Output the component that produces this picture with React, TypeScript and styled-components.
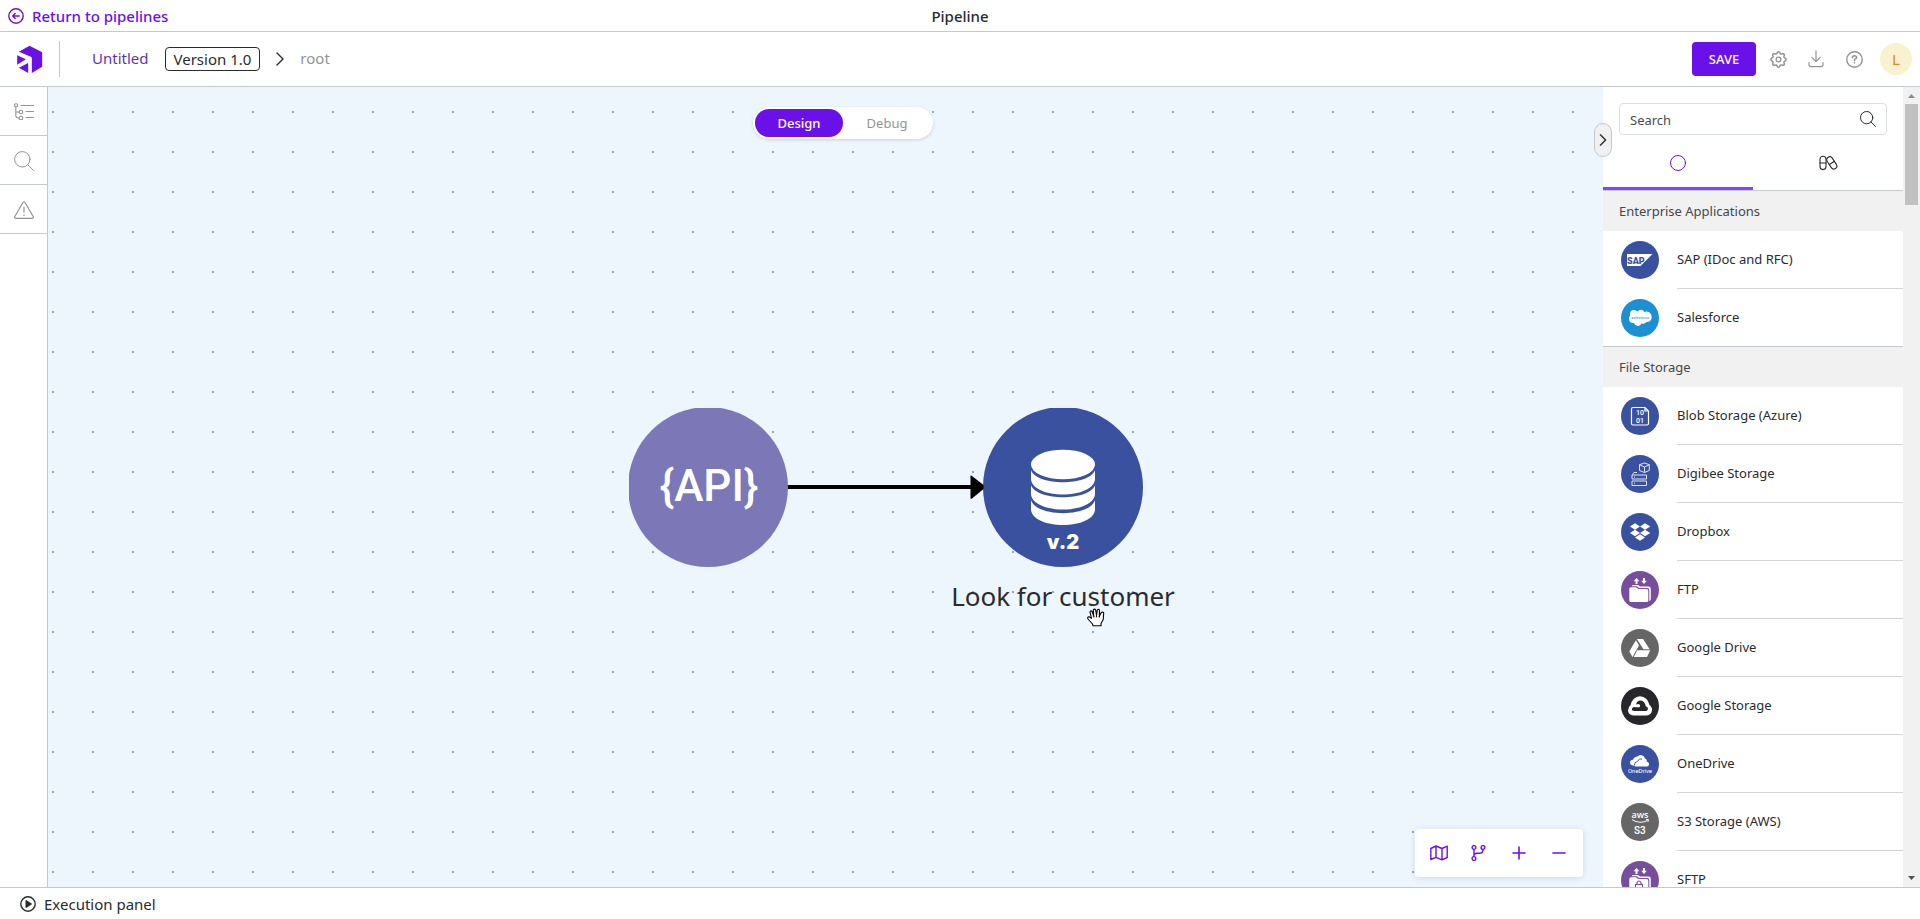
import React from 'react';
import styled, { createGlobalStyle } from 'styled-components';

const color = {
  brand: '#6a11ea',
  brandLight: '#8442ff',
  line: '#c3cacb',
  text: '#2a2b2e',
  muted: '#949494',
  canvas: '#edf5fd',
  panel: '#f1f1f1',
  navy: '#3a519f',
};

const GlobalStyle = createGlobalStyle`
  *, *::before, *::after { box-sizing: border-box; }
  body { margin: 0; }
  body, button, input { font-family: 'Noto Sans', sans-serif; color: ${color.text}; }
  button { margin: 0; padding: 0; border: 0; background: none; cursor: pointer; }
  svg { display: block; flex: none; }
  ul { list-style: none; margin: 0; padding: 0; }
  h1, h2 { margin: 0; font-weight: 400; }
`;

const Page = styled.div`
  display: flex;
  flex-direction: column;
  height: 100vh;
  background: #fff;
  font-size: 15px;
  line-height: 24px;
`;

const TopBar = styled.div`
  display: grid;
  grid-template-columns: 1fr auto 1fr;
  align-items: center;
  height: 32px;
  padding: 0 8px;
  border-bottom: 1px solid ${color.line};
`;

const ReturnLink = styled.a`
  display: flex;
  align-items: center;
  justify-self: start;
  gap: 8px;
  color: ${color.brand};
  font-weight: 500;
  text-decoration: none;
`;

const Title = styled.h1`
  font-size: 15px;
  font-weight: 500;
`;

const Header = styled.header`
  display: flex;
  align-items: center;
  justify-content: space-between;
  height: 55px;
  padding: 0 8px 0 16px;
  border-bottom: 1px solid ${color.line};
`;

const Crumbs = styled.nav`
  display: flex;
  align-items: center;
`;

const LogoBox = styled.div`
  display: flex;
  align-items: center;
  width: 44px;
  height: 36px;
  margin-right: 32px;
  border-right: 1px solid ${color.line};
`;

const FlowLink = styled.a`
  padding-bottom: 2px;
  color: #5e35b1;
  text-decoration: none;
`;

const Version = styled.span`
  height: 24px;
  margin: 0 16px;
  padding: 0 8px;
  border: 1px solid ${color.text};
  border-radius: 4px;
  line-height: 23px;
`;

const Level = styled.span`
  margin-left: 16px;
  padding-bottom: 2px;
  color: ${color.muted};
`;

const Actions = styled.div`
  display: flex;
  align-items: center;
  gap: 14px;
  color: ${color.muted};
`;

const IconButton = styled.button`
  display: flex;
  align-items: center;
  justify-content: center;
  width: 24px;
  height: 24px;
  color: inherit;
`;

const SaveButton = styled.button`
  width: 64px;
  height: 34px;
  margin-right: -4px;
  border-radius: 4px;
  background: ${color.brand};
  color: #fff;
  font-size: 13px;
  font-weight: 500;
`;

const Avatar = styled.button`
  width: 32px;
  height: 32px;
  border-radius: 50%;
  background: #faf1cf;
  color: #d98a2b;
  font-size: 15px;
`;

const Body = styled.div`
  display: flex;
  flex: 1;
  min-height: 0;
`;

const Rail = styled.nav`
  width: 48px;
  flex: none;
  border-right: 1px solid ${color.line};
`;

const RailButton = styled.button`
  display: flex;
  align-items: center;
  justify-content: center;
  width: 100%;
  height: 49px;
  padding-top: 1px;
  border-bottom: 1px solid ${color.line};
  color: ${color.muted};
`;

const Canvas = styled.main`
  position: relative;
  flex: 1;
  min-width: 0;
  overflow: hidden;
  background: ${color.canvas} radial-gradient(circle at 5px 25px, #9fa6b2 1px, transparent 1px) 0 0 / 40px 40px;
`;

const ModeBar = styled.div`
  position: absolute;
  top: 20px;
  left: 0;
  right: 0;
  display: flex;
  justify-content: center;
  padding-left: 35px;
`;

const ModeSwitch = styled.div`
  display: flex;
  padding: 2px;
  width: 180px;
  border-radius: 16px;
  background: #fff;
  box-shadow: 0 1px 3px rgba(60, 70, 100, 0.2);
`;

const Mode = styled.button<{ $active?: boolean }>`
  flex: 1;
  height: 28px;
  border-radius: 14px;
  background: ${(p) => (p.$active ? color.brand : 'transparent')};
  color: ${(p) => (p.$active ? '#fff' : color.muted)};
  font-size: 13px;
  font-weight: ${(p) => (p.$active ? 500 : 400)};
`;

const Graph = styled.svg`
  position: absolute;
  top: 320px;
  left: 580px;
`;

const NodeLabel = styled.div`
  position: absolute;
  top: 489px;
  left: 895px;
  width: 240px;
  font-size: 26px;
  line-height: 40px;
  text-align: center;
  white-space: nowrap;
`;

const Pointer = styled.svg`
  position: absolute;
  top: 521px;
  left: 1039px;
`;

const CanvasTools = styled.div`
  position: absolute;
  right: 20px;
  bottom: 10px;
  display: flex;
  padding: 0 4px;
  border-radius: 4px;
  background: #fff;
  color: ${color.brand};
  box-shadow: 0 1px 6px rgba(60, 70, 100, 0.15);
`;

const Tool = styled(IconButton)`
  width: 40px;
  height: 48px;
`;

const Sidebar = styled.aside`
  position: relative;
  display: flex;
  width: 317px;
  flex: none;
`;

const Collapse = styled.button`
  position: absolute;
  top: 36px;
  left: -9px;
  display: flex;
  align-items: center;
  justify-content: center;
  width: 18px;
  height: 34px;
  border: 1px solid ${color.line};
  border-radius: 9px;
  background: ${color.panel};
`;

const Palette = styled.div`
  flex: 1;
  min-width: 0;
  overflow-y: auto;
  scrollbar-width: none;
`;

const SearchBox = styled.label`
  display: flex;
  align-items: center;
  height: 32px;
  margin: 16px 16px 0;
  padding: 0 10px;
  border: 1px solid #dcdfdf;
  border-radius: 4px;
`;

const SearchInput = styled.input`
  flex: 1;
  min-width: 0;
  height: 28px;
  padding: 2px 0 0;
  border: 0;
  outline: 0;
  background: none;
  font-size: 13px;
  &::placeholder { color: #4a4b4e; opacity: 1; }
`;

const Tabs = styled.div`
  display: flex;
  height: 56px;
  border-bottom: 1px solid ${color.line};
`;

const Tab = styled.button<{ $active?: boolean }>`
  position: relative;
  display: flex;
  align-items: center;
  justify-content: center;
  flex: 1;
  padding-top: 1px;
  color: ${(p) => (p.$active ? color.brand : color.text)};
  box-shadow: ${(p) => (p.$active ? `inset 0 -3px ${color.brandLight}` : 'none')};
`;

const Group = styled.section`
  font-size: 13px;
  & + & { border-top: 1px solid ${color.line}; }
`;

const GroupTitle = styled.h2`
  padding: 0 16px;
  background: ${color.panel};
  color: #45464a;
  font-size: 13px;
  line-height: 40px;
`;

const Item = styled.li`
  display: flex;
  align-items: stretch;
  padding-left: 18px;
  &:last-child > span { border-bottom: 0; height: 57px; }
`;

const ItemIcon = styled.div`
  width: 56px;
  padding-top: 10px;
`;

const ItemName = styled.span`
  flex: 1;
  height: 58px;
  border-bottom: 1px solid #d2d4d5;
  line-height: 56px;
`;

const ScrollTrack = styled.div`
  display: flex;
  flex-direction: column;
  align-items: center;
  width: 17px;
  padding: 7px 0;
  background: ${color.panel};
`;

const ScrollThumb = styled.div`
  width: 13px;
  height: 101px;
  margin-top: 6px;
  margin-bottom: auto;
  background: #c1c1c1;
`;

const Footer = styled.footer`
  height: 32px;
  padding: 0 20px;
  border-top: 1px solid ${color.line};
`;

const PanelButton = styled.button`
  display: flex;
  align-items: center;
  gap: 8px;
  height: 31px;
  font-size: 15px;
`;

type IconProps = { w?: number; h?: number; vb?: string; sw?: number; children: React.ReactNode };

const Line = ({ w = 16, h = w, vb, sw = 1, children }: IconProps) => (
  <svg width={w} height={h} viewBox={vb ?? `0 0 ${w} ${h}`} fill="none" stroke="currentColor" strokeWidth={sw}
    strokeLinecap="round" strokeLinejoin="round" aria-hidden="true">{children}</svg>
);

const Magnifier = ({ size = 16 }: { size?: number }) => (
  <Line w={size} vb="0 0 20 20" sw={20 / size}>
    <circle cx="8.3" cy="8.3" r="7.7" /><path d="M13.8 13.8 19.4 19.4" />
  </Line>
);

const Chevron = ({ h = 14, sw = 1.4 }: { h?: number; sw?: number }) => (
  <Line w={8} h={h} vb="0 0 8 14" sw={sw}><path d="M1 1 7 7 1 13" /></Line>
);

const Logo = () => (
  <svg width="27" height="29" viewBox="0 0 80 87" fill={color.brand} role="img" aria-label="Home">
    <path d="M8 20 40 2 78 22V65L47 84V38L44 35Z" />
    <path d="M3 31 29 43 3 59Z" />
    <path d="M36 54V84L8 68Z" />
  </svg>
);

const TreeIcon = () => (
  <Line w={20} h={17} sw={1.1}>
    <rect x="0.6" y="0.7" width="3" height="3" rx="1" />
    <circle cx="7" cy="9" r="1.8" /><circle cx="7" cy="15" r="1.8" />
    <path d="M1.8 4V12.5Q1.8 15 4.5 15H5M2 9H5" />
    <path d="M7 2.5H19.5M12 8.5H19.5M12 14.5H19.5" />
  </Line>
);

const WarningIcon = () => (
  <Line w={20} h={18} sw={1.2}>
    <path d="M9 1.5Q10 0 11 1.5L19.2 15.5Q19.8 17.3 18 17.3H2Q.2 17.3 .8 15.5Z" />
    <path d="M10 6V11.2M10 13.8V14.4" />
  </Line>
);

const GearIcon = () => (
  <Line w={17} vb="0 0 24 24" sw={1.8}>
    <path d="M10.325 4.317c.426-1.756 2.924-1.756 3.35 0a1.724 1.724 0 0 0 2.573 1.066c1.543-.94 3.31.826 2.37 2.37a1.724 1.724 0 0 0 1.065 2.572c1.756.426 1.756 2.924 0 3.35a1.724 1.724 0 0 0-1.066 2.573c.94 1.543-.826 3.31-2.37 2.37a1.724 1.724 0 0 0-2.572 1.065c-.426 1.756-2.924 1.756-3.35 0a1.724 1.724 0 0 0-2.573-1.066c-1.543.94-3.31-.826-2.37-2.37a1.724 1.724 0 0 0-1.065-2.572c-1.756-.426-1.756-2.924 0-3.35a1.724 1.724 0 0 0 1.066-2.573c-.94-1.543.826-3.31 2.37-2.37.996.608 2.296.07 2.572-1.065z" transform="translate(-2.4 -2.4) scale(1.2)" />
    <circle cx="12" cy="12" r="3.4" />
  </Line>
);

const DownloadIcon = () => (
  <Line w={16} h={18} sw={1.2}>
    <path d="M8 .8V11.4M3.8 7.4 8 11.6 12.2 7.4M1 12.5V14.5Q1 16.6 3 16.6H13Q15 16.6 15 14.5V12.5" />
  </Line>
);

const HelpIcon = () => (
  <Line w={17} vb="0 0 16 16" sw={1.3}>
    <circle cx="8" cy="8" r="7.3" />
    <path d="M6 6.2Q6.1 4.4 8 4.4T10 6.1Q10 7.2 8 8V8.9M8 11V11.3" strokeWidth="1.5" />
  </Line>
);

const PillsIcon = () => (
  <Line w={19} h={16} sw={1.1}>
    <rect x="1" y="1.2" width="6" height="13.4" rx="3" /><path d="M1 8H7" />
    <rect x="-3" y="-6.7" width="6" height="13.4" rx="3" transform="translate(12.8 7.9) rotate(-33)" />
    <path d="M10.4 9.5 15.4 6.3" />
  </Line>
);

const FlowGraph = () => (
  <Graph width="516" height="160" viewBox="0 0 516 160" role="img" aria-label="API trigger connected to Look for customer">
    <clipPath id="node-bounds"><rect x="1" y="1" width="515" height="159" /></clipPath>
    <path d="M158 80H346" stroke="#000" strokeWidth="4" />
    <g clipPath="url(#node-bounds)">
      <circle cx="80" cy="80" r="80" fill="#7c78b8" />
      <circle cx="435" cy="80" r="80" fill={color.navy} />
    </g>
    <path d="M342.5 69.5Q342.5 68 344 69L355.500 78V82L344 91.4Q342.5 92.5 342.5 91Z" />
    <text x="81" y="94" fill="#fff" textAnchor="middle" fontFamily="Roboto, sans-serif" fontWeight="500" fontSize="44">{'{API}'}</text>
    <g transform="translate(403 42.5) scale(.3333)" fill="#fff">
      <ellipse cx="96" cy="45" rx="96" ry="44.5" />
      <path d="M0 62C18 110 174 110 192 62V91C182 150 10 150 0 91Z" />
      <path d="M0 107C18 155 174 155 192 107V136C182 195 10 195 0 136Z" />
      <path d="M0 152C18 204 174 204 192 152V182C182 241 10 241 0 182Z" />
    </g>
    <text x="435" y="142" fill="#fff" textAnchor="middle" fontFamily="Inter, sans-serif" fontWeight="900" fontSize="20">v.2</text>
  </Graph>
);

const HandPointer = () => (
  <Pointer width="18" height="19" viewBox="0 0 18 19" fill="#fff" stroke="#000" strokeWidth="1.1" strokeLinejoin="round" aria-hidden="true">
    <path d="M6 17.8 5.500 16 1 11Q0 9 2 8.700L4.500 10.200 3 4.200Q3.500 2.200 5 3.200L6.700 8 6.300 2Q7.500 .2 8.700 2L9.500 7.500 10.300 2Q11.500 .5 12.500 2.200L12.300 8.300 14.300 4.500Q16.200 3.500 16.700 5L16.200 11.500 14 15.500V17.800Z" />
    <path d="M6.900 8V9.500M9.500 7.500V9.200M12.300 8V9.500" fill="none" />
  </Pointer>
);

const Folder = ({ lock }: { lock?: boolean }) => (
  <g fill="#fff">
    <path d="M15.5 7 18.3 10.2H16.5V13H14.5V10.2H12.7ZM23 13 20.2 9.8H22V7H24V9.8H25.8Z" />
    <path d="M11 15Q11 14 12 14H17L19 15.6H27.5Q29.8 15.6 29.8 18V28Q29.8 29.5 28.3 30.2V19Q28.3 17 26 17H18L16 15.3H11Z" />
    <path d="M8.3 18Q8.3 16.3 10 16.3H15L17.3 18H25.5Q27.3 18 27.3 20V29.5Q27.3 31 25.5 31H10Q8.3 31 8.3 29.5Z" />
    {lock && <path d="M14.5 23.5H21.5V29H14.5ZM16 23.5V21.5Q18 18.5 20 21.5V23.5" fill="none" stroke="#774e9b" strokeWidth="1.2" />}
  </g>
);

const glyphs: Record<string, { bg: string; art: React.ReactNode }> = {
  sap: { bg: color.navy, art: <>
    <path d="M6 13H31.5L19.5 25H6Z" fill="#fff" />
    <text x="6" y="22.5" fill={color.navy} fontFamily="Roboto, sans-serif" fontWeight="900" fontSize="9">SAP</text>
  </> },
  salesforce: { bg: '#1c90d2', art: <>
    <path d="M9 15Q9 11 13 11 15 11 16.5 12.5 18 10.5 20.5 10.7 22.5 11 23.5 13 26 12 28.5 13.5 30.7 15 30.7 18 30.5 23 25.5 23 23.5 25.5 20.5 24.5 19 27.5 16 26.8 13.5 26 13 24 9 24.5 8 21 7.5 17.5 9 16.5Z" fill="#fff" />
    <text x="19.3" y="19.5" fill="#1c90d2" textAnchor="middle" fontFamily="Roboto, sans-serif" fontStyle="italic" fontSize="4">salesforce</text>
  </> },
  blob: { bg: color.navy, art: <>
    <path d="M12 10.5H24L27.5 14V26.5Q27.5 28 26 28H12Q10.5 28 10.5 26.5V12Q10.5 10.5 12 10.5ZM24 10.5V14H27.5" fill="none" stroke="#fff" strokeWidth="1.2" />
    <text x="19" y="18" fill="#fff" textAnchor="middle" fontFamily="Roboto, sans-serif" fontWeight="500" fontSize="7">10</text>
    <text x="19" y="25.5" fill="#fff" textAnchor="middle" fontFamily="Roboto, sans-serif" fontWeight="500" fontSize="7">01</text>
  </> },
  digibee: { bg: color.navy, art:
    <path d="M11 20H25.5V24H11ZM11 26H25.5V30.5H11ZM13 22H14M13 28.2H14M11.5 19.5 13 17.5H16M18.5 9.7 23.5 8 28.3 9.7V15.5L23.5 17.5 18.5 15.5ZM18.5 9.7 23.5 12 28.3 9.7M23.5 12V17.5" fill="none" stroke="#dfe6f7" strokeWidth="1" />
  },
  dropbox: { bg: color.navy, art:
    <path d="M9 13.5 14 10.3 19 13.5 14 16.7ZM19 13.5 24 10.3 29.3 13.5 24 16.7ZM9 20 14 16.8 19 20 14 23.2ZM19 20 24 16.8 29.3 20 24 23.2ZM14 24.4 19 21.2 24 24.4 19 27.8Z" fill="#fff" />
  },
  ftp: { bg: '#774e9b', art: <Folder /> },
  drive: { bg: '#666', art:
    <path d="M15.8 10H22L28.7 20.3H22.5ZM14.9 11.2 18 16.6 11.5 28 8.3 22.5ZM16.2 21.3H29.3L26 28H12.8Z" fill="#fff" />
  },
  gstorage: { bg: '#27272b', art: <>
    <path d="M12.5 28.5Q7.5 28 7 23.5 7 20 9.5 18.3 11.5 10 19 9.3 26.5 9.8 28.5 18 31.5 20.5 31 23.5 30.2 28 25.5 28.5H12.5Z" fill="#fff" />
    <path d="M13.3 24Q10.5 24 11 21.5 12 19.8 14.5 20.2H18.5Q20 18 17.5 17L15 17.5Q16 13.5 19.5 13.5 24 14 24.8 19.2 27 20 27 22 26.5 24 25 24Z" fill="#27272b" />
  </> },
  onedrive: { bg: color.navy, art: <>
    <path d="M12.5 20.5Q9 20.5 9 17.5 9.2 15 12 14.8 13.5 11.5 16.5 11.5 18.5 9.3 21 10.3 23.5 11 24 13.5 26 14 25.8 16.5 28.5 17.5 28 20 27.5 21.5 25.5 21.5H16Q13 21.5 12.5 20.5Z" fill="#fff" />
    <path d="M13.5 20.5Q13 17 16.5 16.3 18 13 21 14" fill="none" stroke={color.navy} strokeWidth=".9" />
    <text x="19" y="28" fill="#fff" textAnchor="middle" fontFamily="Roboto, sans-serif" fontSize="6">OneDrive</text>
  </> },
  s3: { bg: '#666', art: <>
    <text x="19" y="14.5" fill="#fff" textAnchor="middle" fontFamily="'Open Sans', sans-serif" fontWeight="600" fontSize="9">aws</text>
    <path d="M11 16.700Q19 21.500 26.500 17.500M25 16.500 27.500 16.600 26.800 19" fill="none" stroke="#fff" strokeWidth="1" />
    <text x="18.800" y="31" fill="#fff" textAnchor="middle" fontFamily="Roboto, sans-serif" fontWeight="500" fontSize="10">S3</text>
  </> },
  sftp: { bg: '#774e9b', art: <Folder lock /> },
};

const groups = [
  { title: 'Enterprise Applications', items: [['sap', 'SAP (IDoc and RFC)'], ['salesforce', 'Salesforce']] },
  { title: 'File Storage', items: [
    ['blob', 'Blob Storage (Azure)'], ['digibee', 'Digibee Storage'], ['dropbox', 'Dropbox'], ['ftp', 'FTP'],
    ['drive', 'Google Drive'], ['gstorage', 'Google Storage'], ['onedrive', 'OneDrive'],
    ['s3', 'S3 Storage (AWS)'], ['sftp', 'SFTP'],
  ] },
];

export default function App() {
  return (
    <Page>
      <GlobalStyle />
      <TopBar>
        <ReturnLink href="#pipelines">
          <Line sw={1.4}><circle cx="8" cy="8" r="7.2" /><path d="M11.2 8H5M7.2 5.5 4.7 8 7.2 10.5" /></Line>
          Return to pipelines
        </ReturnLink>
        <Title>Pipeline</Title>
      </TopBar>

      <Header>
        <Crumbs aria-label="Breadcrumb">
          <LogoBox><Logo /></LogoBox>
          <FlowLink href="#untitled">Untitled</FlowLink>
          <Version>Version 1.0</Version>
          <Chevron />
          <Level>root</Level>
        </Crumbs>
        <Actions>
          <SaveButton>SAVE</SaveButton>
          <IconButton aria-label="Settings"><GearIcon /></IconButton>
          <IconButton aria-label="Download"><DownloadIcon /></IconButton>
          <IconButton aria-label="Help"><HelpIcon /></IconButton>
          <Avatar aria-label="Account">L</Avatar>
        </Actions>
      </Header>

      <Body>
        <Rail aria-label="Tools">
          <RailButton aria-label="Outline"><TreeIcon /></RailButton>
          <RailButton aria-label="Find"><Magnifier size={20} /></RailButton>
          <RailButton aria-label="Warnings"><WarningIcon /></RailButton>
        </Rail>

        <Canvas>
          <ModeBar>
            <ModeSwitch>
              <Mode $active>Design</Mode>
              <Mode>Debug</Mode>
            </ModeSwitch>
          </ModeBar>
          <FlowGraph />
          <NodeLabel>Look for customer</NodeLabel>
          <HandPointer />
          <CanvasTools>
            <Tool aria-label="Map">
              <Line w={18} h={16} sw={1.4}><path d="M.8 3.5 6 1 12 3.5 17.2 1.2V12.5L12 14.8 6 12.3 .8 14.5ZM6 1V12.3M12 3.5V14.8" /></Line>
            </Tool>
            <Tool aria-label="Versions">
              <Line w={16} h={16} sw={1.4}>
                <circle cx="3" cy="2.5" r="1.9" /><circle cx="12" cy="2.5" r="1.9" /><circle cx="3" cy="13.5" r="1.9" />
                <path d="M3 4.5V11.5M12 4.5Q12 8.3 8.5 8.3H6Q3 8.3 3 10.5" />
              </Line>
            </Tool>
            <Tool aria-label="Zoom in"><Line w={14} sw={1.6}><path d="M1 7H13M7 1V13" /></Line></Tool>
            <Tool aria-label="Zoom out"><Line w={14} sw={1.6}><path d="M1 7H13" /></Line></Tool>
          </CanvasTools>
        </Canvas>

        <Sidebar>
          <Palette>
            <SearchBox>
              <SearchInput type="text" placeholder="Search" aria-label="Search" />
              <Magnifier />
            </SearchBox>
            <Tabs role="tablist">
              <Tab $active role="tab" aria-selected="true" aria-label="Components"><Line><circle cx="8" cy="8" r="7.5" /></Line></Tab>
              <Tab role="tab" aria-selected="false" aria-label="Capsules"><PillsIcon /></Tab>
            </Tabs>
            {groups.map((group) => (
              <Group key={group.title}>
                <GroupTitle>{group.title}</GroupTitle>
                <ul>
                  {group.items.map(([id, name]) => (
                    <Item key={id}>
                      <ItemIcon>
                        <svg width="38" height="38" viewBox="0 0 38 38" aria-hidden="true">
                          <circle cx="19" cy="19" r="19" fill={glyphs[id].bg} />
                          {glyphs[id].art}
                        </svg>
                      </ItemIcon>
                      <ItemName>{name}</ItemName>
                    </Item>
                  ))}
                </ul>
              </Group>
            ))}
          </Palette>
          <ScrollTrack aria-hidden="true">
            <svg width="7" height="4" viewBox="0 0 7 4" fill="#8b8b8b"><path d="M0 4 3.5 0 7 4Z" /></svg>
            <ScrollThumb />
            <svg width="7" height="4" viewBox="0 0 7 4" fill="#505050"><path d="M0 0 3.5 4 7 0Z" /></svg>
          </ScrollTrack>
          <Collapse aria-label="Collapse panel"><Chevron h={12} sw={1.6} /></Collapse>
        </Sidebar>
      </Body>

      <Footer>
        <PanelButton>
          <Line sw={1.4}><circle cx="8" cy="8" r="7.2" /><path d="M6.2 4.8 11.2 8 6.2 11.2Z" fill="currentColor" /></Line>
          Execution panel
        </PanelButton>
      </Footer>
    </Page>
  );
}
